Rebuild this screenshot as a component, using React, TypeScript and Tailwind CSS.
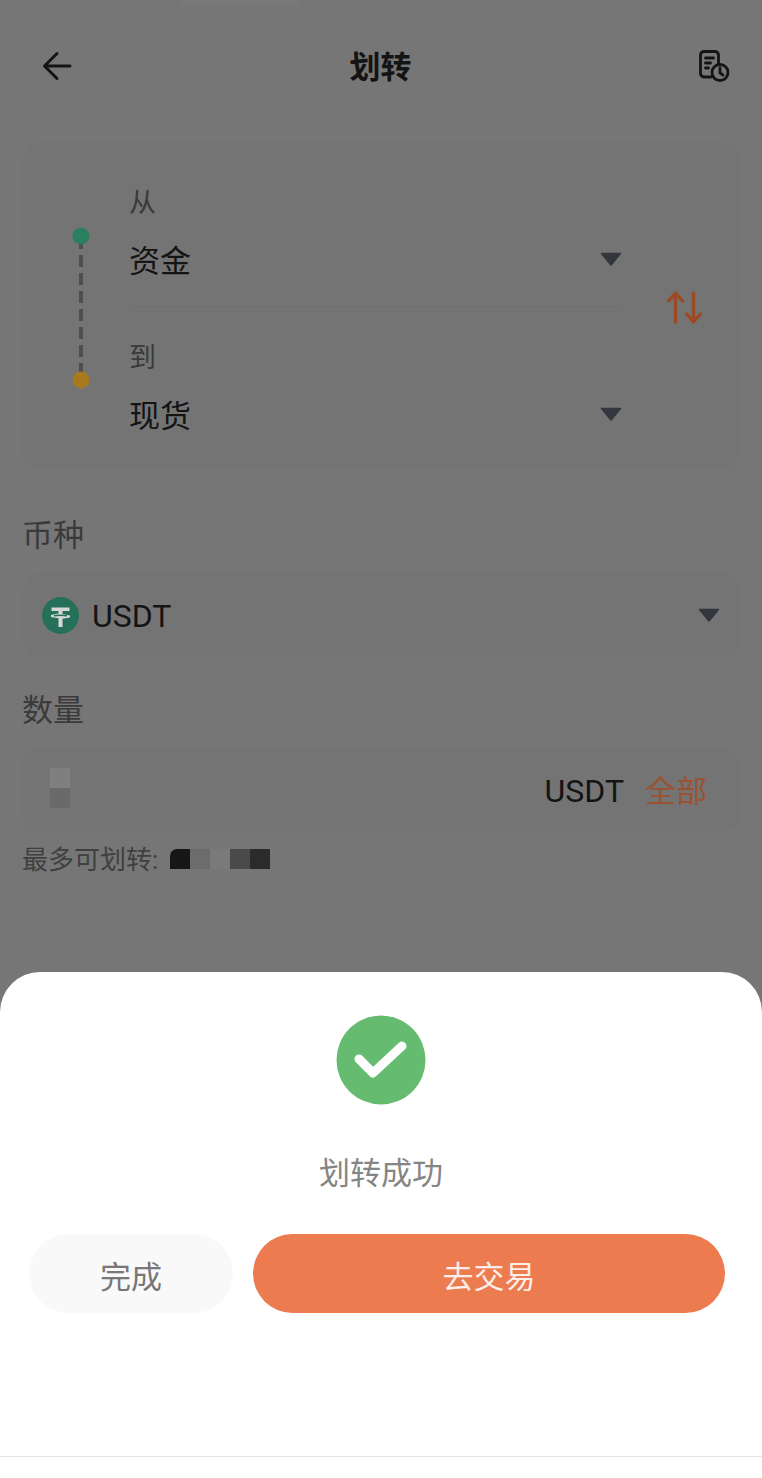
import React from "react";

const Caret = () => (
  <svg width="22" height="14" viewBox="0 0 22 14" className="shrink-0">
    <path d="M1.5 1.5h19L11 13z" fill="#34363f" stroke="#34363f" strokeWidth="1.5" strokeLinejoin="round" />
  </svg>
);

const BackArrow = () => (
  <svg width="32" height="32" viewBox="0 0 32 32" fill="none" stroke="#141414" strokeWidth="3" strokeLinecap="round" strokeLinejoin="round">
    <path d="M29 16H4M16 3.500 3.500 16 16 28.500" />
  </svg>
);

const RecordIcon = () => (
  <svg width="32" height="32" viewBox="0 0 32 32" fill="none" stroke="#141414" strokeWidth="2.8" strokeLinecap="round" strokeLinejoin="round">
    <path d="M13 27H6a3.500 3.500 0 0 1-3.500-3.500V5A3.500 3.500 0 0 1 6 1.500h11A3.500 3.500 0 0 1 20.500 5v8" />
    <path d="M7.500 8h8M7.500 13h5M7.500 18h3" />
    <circle cx="22" cy="22.500" r="8" />
    <path d="M22 18v5l3 2" />
  </svg>
);

const SwapIcon = () => (
  <svg width="36" height="33" viewBox="0 0 36 33" fill="none" stroke="#9c4a25" strokeWidth="3.400" strokeLinecap="round" strokeLinejoin="round">
    <path d="M8.500 31V2M1.500 10l7-8 7 8" />
    <path d="M26.500 2v29M19.500 23l7 8 7-8" />
  </svg>
);

const TetherLogo = () => (
  <svg width="37" height="37" viewBox="0 0 37 37" className="shrink-0">
    <circle cx="18.500" cy="18.500" r="18.500" fill="#26705a" />
    <path d="M9.500 10.500h18v3.500h-7v3l7.500 1.500v2l-7.500 1.300V30h-4v-8.700L9 20v-2l7.500-1.500v-2.500h-7z" fill="#d8d8d8" />
    <path d="M12 18.800c3-.8 10-.8 13 0" fill="none" stroke="#26705a" strokeWidth="1.400" />
  </svg>
);

const Timeline = () => (
  <svg width="18" height="162" viewBox="0 0 18 162" className="shrink-0">
    <path d="M9 10v142" stroke="#4f4f4f" strokeWidth="4" strokeDasharray="12 6" />
    <circle cx="9" cy="9" r="8.500" fill="#2c7f5e" />
    <circle cx="9" cy="153" r="8.500" fill="#a87a1e" />
  </svg>
);

const Blocks = ({ colors }: { colors: string[] }) => (
  <div className="flex">
    {colors.map((c, i) => (
      <div key={i} className="w-5 h-5 first:rounded-tl-[7px]" style={{ backgroundColor: c }} />
    ))}
  </div>
);

export default function App() {
  return (
    <div className="relative w-[762px] h-[1478px] bg-[#767676] overflow-hidden [font-family:Roboto,'Noto_Sans_CJK_SC',sans-serif]">
      <div className="absolute left-[180px] top-0 w-[120px] h-[4px] bg-[#787a7d] blur-[2px]" />
      <div className="h-[972px] px-[22px]">
        <header className="h-[142px] pt-[50px] flex items-start justify-between pl-[19px] pr-[10px]">
          <BackArrow />
          <h1 className="text-[31px] leading-[40px] font-bold text-[#141414] -mt-[2px] mr-[18px] ml-[8px]">划转</h1>
          <RecordIcon />
        </header>

        <section className="h-[328px] rounded-[20px] bg-[#747474] flex pl-[50px] pr-[37px]">
          <div className="pt-[85px]">
            <Timeline />
          </div>
          <div className="ml-[40px] flex-1 pt-[42px]">
            <div className="-ml-[1px] text-[27px] leading-[38px] text-[#3a3a3a]">从</div>
            <div className="mt-[20px] flex items-center justify-between border-b border-[#707070] pb-[24px]">
              <span className="-ml-[1px] text-[31px] leading-[40px] text-[#141414]">资金</span>
              <span className="-mt-[7px]"><Caret /></span>
            </div>
            <div className="mt-[32px] -ml-[1px] text-[27px] leading-[38px] text-[#3a3a3a]">到</div>
            <div className="mt-[20px] flex items-center justify-between">
              <span className="-ml-[1px] text-[31px] leading-[40px] text-[#141414]">现货</span>
              <span className="-mt-[7px]"><Caret /></span>
            </div>
          </div>
          <div className="ml-[45px] pt-[149px]">
            <SwapIcon />
          </div>
        </section>

        <div className="mt-[45px] text-[31px] leading-[42px] text-[#3a3a3a]">币种</div>
        <div className="mt-[16px] h-[84px] rounded-[20px] bg-[#747474] flex items-center pl-[20px] pr-[20px]">
          <TetherLogo />
          <span className="mt-[1px] ml-[13px] text-[32px] leading-[40px] text-[#141414]">USDT</span>
          <span className="ml-auto"><Caret /></span>
        </div>

        <div className="mt-[33px] text-[31px] leading-[42px] text-[#3a3a3a]">数量</div>
        <div className="mt-[16px] h-[84px] rounded-[20px] bg-[#747474] flex items-center pl-[28px] pr-[33px]">
          <div className="-mt-[4px] flex flex-col">
            <div className="w-5 h-5 bg-[#7f7f7f]" />
            <div className="w-5 h-5 bg-[#6a6a6a]" />
          </div>
          <span className="mt-[2px] ml-auto text-[32px] leading-[40px] text-[#141414]">USDT</span>
          <span className="mt-[4px] ml-[21px] text-[31px] leading-[40px] text-[#9a5233]">全部</span>
        </div>

        <div className="mt-[11px] h-[32px] flex items-center">
          <span className="mt-[2px] text-[26px] leading-[32px] text-[#404040] w-[148px]">最多可划转:</span>
          <Blocks colors={["#161616", "#6c6c6c", "#7a7a7a", "#4a4a4a", "#2b2b2b"]} />
        </div>
      </div>

      <div className="h-[506px] rounded-t-[40px] bg-white flex flex-col items-center">
        <svg width="90" height="90" viewBox="0 0 90 90" className="mt-[43px]">
          <circle cx="45" cy="45" r="44.500" fill="#65bb6f" />
          <path d="M23 44l14 14 29-27" fill="none" stroke="#fff" strokeWidth="9" strokeLinecap="round" strokeLinejoin="round" />
        </svg>
        <div className="mt-[47px] text-[31px] leading-[44px] text-[#858585]">划转成功</div>
        <div className="mt-[38px] w-full flex gap-[20px] pl-[29px] pr-[37px]">
          <button className="w-[204px] h-[79px] pt-[10px] rounded-full bg-[#f9f9f9] text-[31px] text-[#777777]">完成</button>
          <button className="flex-1 h-[79px] pt-[10px] rounded-full bg-[#ec7b50] text-[31px] text-[#fbeee8]">去交易</button>
        </div>
        <div className="mt-[143px] w-full border-t border-[#e4e4e4]" />
      </div>
    </div>
  );
}
